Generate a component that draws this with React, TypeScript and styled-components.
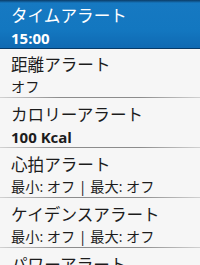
import styled, { createGlobalStyle } from "styled-components";

type AlertItem = {
  title: string;
  value: string;
  bold?: boolean;
};

const items: AlertItem[] = [
  { title: "タイムアラート", value: "15:00", bold: true },
  { title: "距離アラート", value: "オフ" },
  { title: "カロリーアラート", value: "100 Kcal", bold: true },
  { title: "心拍アラート", value: "最小: オフ | 最大: オフ" },
  { title: "ケイデンスアラート", value: "最小: オフ | 最大: オフ" },
  { title: "パワーアラート", value: "最小: オフ | 最大: オフ" },
];

const GlobalStyle = createGlobalStyle`
  html, body {
    margin: 0;
    padding: 0;
    background: #f6f6f6;
  }
  body {
    width: 200px;
    height: 265px;
    overflow: hidden;
    font-family: "Open Sans", "Noto Sans CJK JP", sans-serif;
    color: #1c1c1c;
  }
`;

const List = styled.div`
  display: flex;
  flex-direction: column;
  width: 200px;
  height: 265px;
  overflow: hidden;
`;

const Row = styled.div<{ $selected?: boolean }>`
  position: relative;
  flex: none;
  box-sizing: border-box;
  display: flex;
  flex-direction: column;
  padding: 3px 0 0 11px;
  height: ${({ $selected }) => ($selected ? "49px" : "50px")};
  color: ${({ $selected }) => ($selected ? "#ffffff" : "#1c1c1c")};
  background: ${({ $selected }) =>
    $selected
      ? "linear-gradient(to bottom, #0b3b66 0px, #1679c2 3px, #1377c0 30px, #0f6ab3 47px)"
      : "transparent"};
  border-bottom: 1px solid
    ${({ $selected }) => ($selected ? "#063a68" : "transparent")};

  &::after {
    content: "";
    display: ${({ $selected }) => ($selected ? "none" : "block")};
    position: absolute;
    left: 0;
    right: 0;
    bottom: 0;
    height: 1px;
    background: linear-gradient(
      to right,
      #d2d2d2 0%,
      #8c8c8c 30%,
      #8c8c8c 70%,
      #d2d2d2 100%
    );
  }
`;

const Title = styled.div`
  font-size: 16.6px;
  line-height: 25px;
  white-space: nowrap;
`;

const Value = styled.div<{ $bold?: boolean }>`
  font-size: ${({ $bold }) => ($bold ? "15px" : "14.2px")};
  line-height: 20px;
  font-weight: ${({ $bold }) => ($bold ? 700 : 400)};
  white-space: nowrap;
`;

export default function App() {
  return (
    <>
      <GlobalStyle />
      <List>
        {items.map((item, i) => (
          <Row key={item.title} $selected={i === 0}>
            <Title>{item.title}</Title>
            <Value $bold={item.bold}>{item.value}</Value>
          </Row>
        ))}
      </List>
    </>
  );
}
